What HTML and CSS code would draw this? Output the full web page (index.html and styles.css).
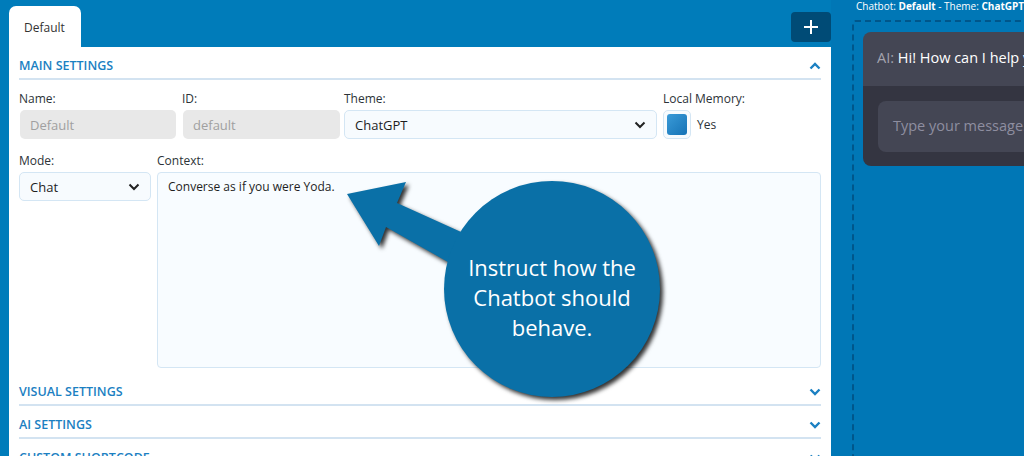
FILE: index.html
```html
<!DOCTYPE html>
<html lang="en">

<head>
    <meta charset="UTF-8">
    <title>Chatbot Settings</title>
    <link rel="stylesheet" href="styles.css">
</head>

<body>
    <div class="page">
        <div class="editor">
            <div class="tabs">
                <div class="tab">Default</div>
                <button class="add">
                    <svg width="16" height="16" viewBox="0 0 16 16"><path d="M8 1v14M1 8h14" stroke="#fff" stroke-width="2" /></svg>
                </button>
            </div>

            <div class="panel">
                <div class="section-head">
                    <span>MAIN SETTINGS</span>
                    <svg class="chev" width="12" height="8" viewBox="0 0 12 8"><path d="M1.5 6.5L6 2l4.5 4.5" fill="none" stroke="#1b80c2" stroke-width="2.4" /></svg>
                </div>
                <div class="section-body">
                    <div class="row">
                        <div class="field f-name">
                            <label>Name:</label>
                            <div class="input disabled">Default</div>
                        </div>
                        <div class="field f-id">
                            <label>ID:</label>
                            <div class="input disabled">default</div>
                        </div>
                        <div class="field f-theme">
                            <label>Theme:</label>
                            <div class="select">
                                <span>ChatGPT</span>
                                <svg width="12" height="8" viewBox="0 0 12 8"><path d="M1.5 1.5L6 6l4.5-4.5" fill="none" stroke="#222" stroke-width="2" /></svg>
                            </div>
                        </div>
                        <div class="field f-memory">
                            <label>Local Memory:</label>
                            <div class="check-line">
                                <div class="checkbox"><div class="tick"></div></div>
                                <span>Yes</span>
                            </div>
                        </div>
                    </div>
                    <div class="row">
                        <div class="field f-mode">
                            <label>Mode:</label>
                            <div class="select">
                                <span>Chat</span>
                                <svg width="12" height="8" viewBox="0 0 12 8"><path d="M1.5 1.5L6 6l4.5-4.5" fill="none" stroke="#222" stroke-width="2" /></svg>
                            </div>
                        </div>
                        <div class="field f-context">
                            <label>Context:</label>
                            <div class="textarea">Converse as if you were Yoda.</div>
                        </div>
                    </div>
                </div>

                <div class="section-head">
                    <span>VISUAL SETTINGS</span>
                    <svg class="chev" width="12" height="8" viewBox="0 0 12 8"><path d="M1.5 1.5L6 6l4.5-4.5" fill="none" stroke="#1b80c2" stroke-width="2.4" /></svg>
                </div>
                <div class="section-head">
                    <span>AI SETTINGS</span>
                    <svg class="chev" width="12" height="8" viewBox="0 0 12 8"><path d="M1.5 1.5L6 6l4.5-4.5" fill="none" stroke="#1b80c2" stroke-width="2.4" /></svg>
                </div>
                <div class="section-head">
                    <span>CUSTOM SHORTCODE</span>
                    <svg class="chev" width="12" height="8" viewBox="0 0 12 8"><path d="M1.5 1.5L6 6l4.5-4.5" fill="none" stroke="#1b80c2" stroke-width="2.4" /></svg>
                </div>
            </div>
        </div>

        <div class="preview">
            <div class="preview-title">Chatbot: <b>Default</b> - Theme: <b>ChatGPT</b></div>
            <div class="dropzone">
                <div class="chat">
                    <div class="chat-msgs"><span class="who">AI:</span> Hi! How can I help you?</div>
                    <div class="chat-foot">
                        <div class="chat-input">Type your message...</div>
                    </div>
                </div>
            </div>
        </div>
    </div>

    <!-- callout drawn over the form -->
    <div class="callout">
        <svg width="350" height="240" viewBox="0 0 350 240">
            <g class="callout-shape">
                <polygon points="17,24 76,12 67,33 140,66 125,96 56,57 49,76" fill="#0a70a7" />
                <circle cx="222" cy="119" r="108" fill="#0a70a7" />
            </g>
        </svg>
        <div class="callout-text">Instruct how the<br>Chatbot should<br>behave.</div>
    </div>
</body>

</html>
```

FILE: styles.css
```css
body {
    margin: 0;
    height: 456px;
    overflow: hidden;
    background-color: #007cba;
    font-family: "Open Sans", "Noto Sans", sans-serif;
    color: #2c3338;
    position: relative;
}

.page {
    display: flex;
    height: 456px;
}

.editor {
    width: 822px;
    margin-left: 9px;
    flex-shrink: 0;
}

.tabs {
    display: flex;
    justify-content: space-between;
    align-items: flex-end;
    height: 47px;
}

.tab {
    background: #fff;
    width: 72px;
    height: 41px;
    border-radius: 7px 7px 0 0;
    box-sizing: border-box;
    padding: 13px 0 0 15px;
    font-size: 12px;
    color: #333;
}

.add {
    align-self: flex-start;
    margin-top: 12px;
    width: 40px;
    height: 30px;
    border: 0;
    border-radius: 4px;
    background: #004b76;
    display: flex;
    align-items: center;
    justify-content: center;
    padding: 0;
}

.panel {
    background: #fff;
    padding: 0 10px;
    height: 409px;
}

.section-head {
    height: 33px;
    box-sizing: border-box;
    border-bottom: 2px solid #d3e3f1;
    display: flex;
    align-items: flex-end;
    justify-content: space-between;
    padding: 0 0 4px 0;
    font-size: 12.5px;
    font-weight: 600;
    color: #1b80c2;
    line-height: 16px;
}

.section-head .chev {
    margin: 0 0 4px 0;
}

.section-body {
    padding: 11px 0 5px;
}

.row {
    display: flex;
    gap: 6px;
}

.row + .row {
    margin-top: 14px;
}

.field {
    display: flex;
    flex-direction: column;
    gap: 3px;
}

label {
    font-size: 12px;
    line-height: 16px;
    color: #2c3338;
}

.f-name { width: 157px; }
.f-id { width: 158px; }
.f-theme { width: 313px; margin-left: -2px; }
.f-mode { width: 132px; }
.f-context { flex: 1; }

.input,
.select {
    height: 29px;
    box-sizing: border-box;
    border-radius: 5px;
    font-size: 13px;
    display: flex;
    align-items: center;
    padding: 0 10px;
}

.input.disabled {
    background: #e8e8e8;
    color: #a0a0a0;
    margin-left: 1px;
}

.select {
    background: #f7fbfe;
    border: 1px solid #d4e6f4;
    justify-content: space-between;
    color: #1e1e1e;
}

.check-line {
    display: flex;
    align-items: center;
    gap: 6px;
    font-size: 12px;
}

.checkbox {
    width: 28px;
    height: 29px;
    box-sizing: border-box;
    border: 1px solid #d4e6f4;
    background: #f7fbfe;
    border-radius: 5px;
    padding: 3px;
}

.tick {
    height: 100%;
    border-radius: 3px;
    background: linear-gradient(135deg, #3a9bd8, #1673b6);
}

.textarea {
    height: 196px;
    box-sizing: border-box;
    border: 1px solid #d4e6f4;
    border-radius: 4px;
    background: #f8fcff;
    padding: 5px 10px;
    font-size: 12px;
    color: #1e1e1e;
}

.preview {
    flex: 1;
    background: #0077b6;
    overflow: hidden;
    padding: 0 0 0 21px;
}

.preview-title {
    color: #fff;
    font-size: 10px;
    line-height: 12px;
    padding-left: 4px;
    white-space: nowrap;
}

.dropzone {
    margin-top: 8px;
    width: 400px;
    height: 460px;
    border: 2px dashed #00568a;
    border-radius: 3px;
    padding: 10px 9px;
}

.chat {
    width: 380px;
    border-radius: 8px;
    overflow: hidden;
}

.chat-msgs {
    background: #444654;
    height: 54px;
    box-sizing: border-box;
    padding: 15px 14px;
    color: #fff;
    font-size: 14.5px;
    line-height: 22px;
    white-space: nowrap;
}

.chat-msgs .who {
    color: #a3a3ae;
}

.chat-foot {
    background: #343541;
    padding: 15px 0 14px 15px;
}

.chat-input {
    background: #444654;
    height: 51px;
    border-radius: 8px;
    box-sizing: border-box;
    padding: 14px 15px;
    color: #8e8ea0;
    font-size: 14.5px;
    line-height: 22px;
    white-space: nowrap;
}

.callout {
    position: absolute;
    left: 330px;
    top: 170px;
    width: 350px;
    height: 240px;
}

.callout-shape {
    filter: drop-shadow(3px 3px 2px rgba(0, 0, 0, 0.8));
}

.callout-text {
    position: absolute;
    left: 114px;
    top: 82px;
    width: 216px;
    text-align: center;
    color: #fff;
    font-family: "Open Sans", sans-serif;
    font-size: 22px;
    line-height: 30px;
}
```
